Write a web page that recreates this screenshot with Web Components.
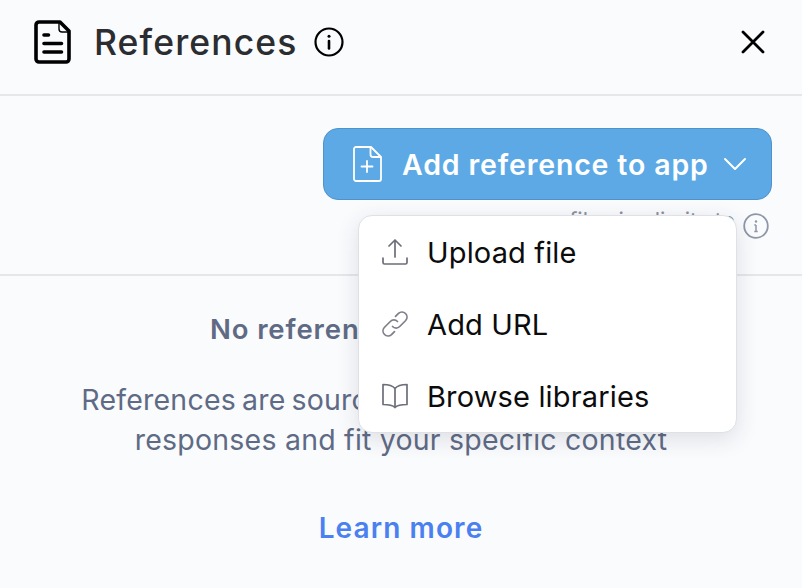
<!DOCTYPE html>
<html>
<head>
<meta charset="utf-8">
<style>
    html, body { margin: 0; height: 100%; }
    body { background: #fafbfd; font-family: Inter, "Liberation Sans", sans-serif; overflow: hidden; }
</style>
</head>
<body>
<references-panel></references-panel>

<script>
const icons = {
    doc: `<svg width="38" height="44" viewBox="0 0 38 44" fill="none" stroke="#000" stroke-width="3.6" stroke-linecap="round" stroke-linejoin="round"><path d="M5 2h21l9 9v28a3 3 0 0 1-3 3H5a3 3 0 0 1-3-3V5a3 3 0 0 1 3-3z"/><path d="M25 3v6a3 3 0 0 0 3 3h6" stroke-width="1.4"/><path d="M10 15h4.500M10 23.500h17.500M10 32h17.500"/></svg>`,
    info: `<svg width="30" height="30" viewBox="0 0 30 30" fill="none" stroke="#000"><circle cx="15" cy="15" r="13.500" stroke-width="2.200"/><path d="M15 14v7.500" stroke-width="2.600" stroke-linecap="round"/><circle cx="15" cy="9.200" r="1.500" fill="#000" stroke="none"/></svg>`,
    close: `<svg width="24" height="24" viewBox="0 0 24 24" fill="none" stroke="#000" stroke-width="2.800" stroke-linecap="round"><path d="M2 2l20 20M22 2L2 22"/></svg>`,
    addDoc: `<svg width="30" height="36" viewBox="0 0 30 36" fill="none" stroke="#fff" stroke-width="1.800" stroke-linecap="round" stroke-linejoin="round"><path d="M3 1h15l10 10v22a2 2 0 0 1-2 2H3a2 2 0 0 1-2-2V3a2 2 0 0 1 2-2z"/><path d="M17.500 1.500v7a2.500 2.500 0 0 0 2.500 2.500h7.500"/><path d="M14 15v11M8.500 20.500h11"/></svg>`,
    chevron: `<svg width="24" height="14" viewBox="0 0 24 14" fill="none" stroke="#fff" stroke-width="2" stroke-linecap="round" stroke-linejoin="round"><path d="M2 2l10 10L22 2"/></svg>`,
    smallInfo: `<svg width="26" height="26" viewBox="0 0 26 26" fill="none" stroke="#8e96a8"><circle cx="13" cy="13" r="11.800" stroke-width="1.800"/><path d="M13 12v6.500M11.300 12H13M11.300 18.500h3.400" stroke-width="1.500"/><circle cx="13" cy="8.500" r="1.200" fill="#8e96a8" stroke="none"/></svg>`,
    upload: `<svg width="28" height="28" viewBox="0 0 28 28" fill="none" stroke="#6b6f78" stroke-width="1.700" stroke-linecap="round" stroke-linejoin="round"><path d="M14 19V2.500M8 8l6-6 6 6"/><path d="M2 20v4.500a1.500 1.500 0 0 0 1.500 1.500h21a1.500 1.500 0 0 0 1.500-1.500V20"/></svg>`,
    link: `<svg width="28" height="28" viewBox="0 0 28 28" fill="none" stroke="#7b7f88" stroke-width="1.700" stroke-linecap="round" stroke-linejoin="round"><path d="M11.500 16.500a5 5 0 0 0 7.200 0l6-6a5.100 5.100 0 0 0-7.200-7.200l-3 3"/><path d="M16.500 11.500a5 5 0 0 0-7.200 0l-6 6a5.100 5.100 0 0 0 7.200 7.200l3-3"/></svg>`,
    book: `<svg width="28" height="28" viewBox="0 0 28 28" fill="none" stroke="#6b6f78" stroke-width="1.700" stroke-linecap="round" stroke-linejoin="round"><path d="M14 6.500C12 4 8 2.500 2 2.500v20c6 0 10 1 12 3 2-2 6-3 12-3v-20c-6 0-10 1.500-12 4zM14 6.500v19"/></svg>`
};

class RefHeader extends HTMLElement {
    constructor() {
        super();
        this.attachShadow({mode: "open"}).innerHTML = `
            <style>
                :host { display: flex; align-items: center; box-sizing: border-box; height: 96px; padding: 0 37px 10px 34px; border-bottom: 2px solid #e5e7eb; }
                h1 { margin: 0 0 0 22px; font-size: 35.500px; font-weight: 500; letter-spacing: 1.100px; color: #2b2d31; }
                .info { display: flex; margin-left: 17px; }
                .close { display: flex; margin-left: auto; }
            </style>
            ${icons.doc}
            <h1>References</h1>
            <span class="info">${icons.info}</span>
            <span class="close">${icons.close}</span>
        `;
    }
}

class AddButton extends HTMLElement {
    constructor() {
        super();
        this.attachShadow({mode: "open"}).innerHTML = `
            <style>
                :host { display: flex; align-items: center; box-sizing: border-box; width: 449px; height: 72px; padding: 0 24px 0 29px; background: #5ca9e6; border: 1.500px solid #4f93ca; border-radius: 15px; color: #fff; font-size: 28.500px; font-weight: 600; letter-spacing: 0.850px; }
                span { margin: 0 auto 0 19px; white-space: nowrap; }
            </style>
            ${icons.addDoc}
            <span><slot></slot></span>
            ${icons.chevron}
        `;
    }
}

class MenuItem extends HTMLElement {
    constructor() {
        super();
        const icon = icons[this.getAttribute("icon")];
        this.attachShadow({mode: "open"}).innerHTML = `
            <style>
                :host { display: flex; align-items: center; height: 72px; padding-left: 22px; font-size: 29px; font-weight: 400; letter-spacing: 0.150px; color: #0c0c0d; }
                svg { flex: none; }
                span { margin-left: 18px; white-space: nowrap; }
            </style>
            ${icon}
            <span><slot></slot></span>
        `;
    }
}

class RefMenu extends HTMLElement {
    constructor() {
        super();
        this.attachShadow({mode: "open"}).innerHTML = `
            <style>
                :host { display: block; position: absolute; left: 358px; top: 215px; box-sizing: border-box; width: 379px; height: 218px; background: #fff; border: 1.500px solid #dfe1e5; border-radius: 14px; box-shadow: 0 6px 22px rgba(40, 50, 70, 0.14); }
            </style>
            <slot></slot>
        `;
    }
}

class EmptyState extends HTMLElement {
    constructor() {
        super();
        this.attachShadow({mode: "open"}).innerHTML = `
            <style>
                :host { display: block; text-align: center; padding-top: 34px; color: #5f6b85; }
                h2 { margin: 0; font-size: 27.500px; line-height: 38px; font-weight: 600; letter-spacing: 0.900px; }
                h2 span { word-spacing: -5px; }
                p { margin: 32px 0 0; font-size: 28.500px; line-height: 40px; font-weight: 400; letter-spacing: 0.220px; }
                p span { word-spacing: -2.300px; }
                a { display: block; margin-top: 49px; font-size: 28px; line-height: 38px; font-weight: 600; letter-spacing: 1.100px; color: #4a80ef; }
            </style>
            <h2>No references <span>added to app</span></h2>
            <p><span>References are sources that help AI personalize</span><br>responses and fit your specific context</p>
            <a>Learn more</a>
        `;
    }
}

class ReferencesPanel extends HTMLElement {
    constructor() {
        super();
        this.attachShadow({mode: "open"}).innerHTML = `
            <style>
                :host { display: block; position: relative; height: 588px; overflow: hidden; }
                .actions { box-sizing: border-box; height: 180px; padding: 32px 30px 0; border-bottom: 2px solid #e5e7eb; display: flex; flex-direction: column; align-items: flex-end; }
                .hint { display: flex; margin: 13px 3px 0 0; gap: 8px; font-size: 22px; color: #8a909c; }
                .hint span { margin-top: -4px; line-height: 22px; white-space: nowrap; }
            </style>
            <ref-header></ref-header>
            <div class="actions">
                <add-button>Add reference to app</add-button>
                <div class="hint"><span>file size limits to</span>${icons.smallInfo}</div>
            </div>
            <empty-state></empty-state>
            <ref-menu>
                <menu-item icon="upload">Upload file</menu-item>
                <menu-item icon="link">Add URL</menu-item>
                <menu-item icon="book">Browse libraries</menu-item>
            </ref-menu>
        `;
    }
}

customElements.define("ref-header", RefHeader);
customElements.define("add-button", AddButton);
customElements.define("menu-item", MenuItem);
customElements.define("ref-menu", RefMenu);
customElements.define("empty-state", EmptyState);
customElements.define("references-panel", ReferencesPanel);
</script>
</body>
</html>
